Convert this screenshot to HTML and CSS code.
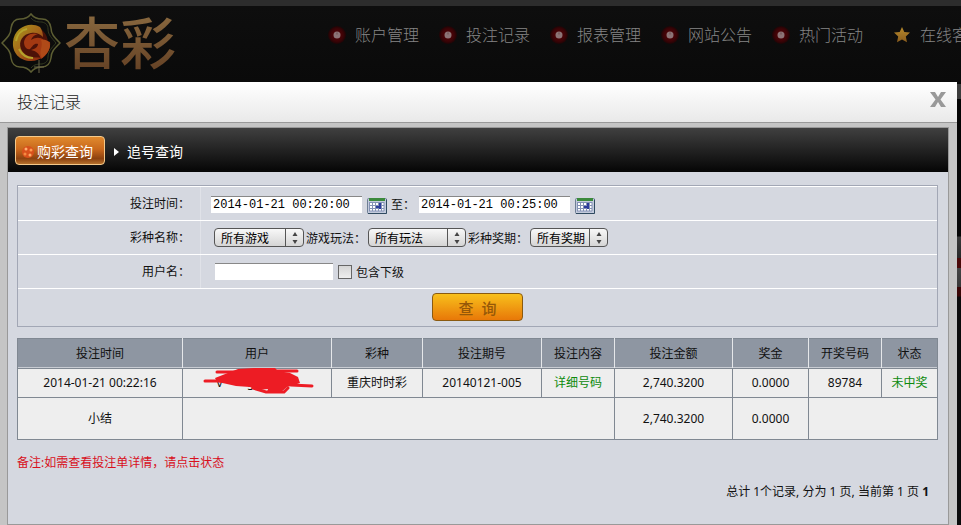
FILE: index.html
```html
<!DOCTYPE html>
<html lang="zh-CN">
<head>
  <meta charset="utf-8">
  <title>投注记录</title>
  <link rel="stylesheet" href="styles.css">
</head>
<body>
<svg class="defs" width="0" height="0">
  <defs>
    <radialGradient id="red">
      <stop offset="0" stop-color="#5a0508"/>
      <stop offset="0.7" stop-color="#3c0306"/>
      <stop offset="1" stop-color="#1c0506"/>
    </radialGradient>
    <linearGradient id="gold" x1="0" y1="0" x2="0" y2="1">
      <stop offset="0" stop-color="#b78a2c"/>
      <stop offset="1" stop-color="#8a5c1d"/>
    </linearGradient>
    <linearGradient id="fire" x1="0" y1="0" x2="1" y2="1">
      <stop offset="0" stop-color="#a89a1c"/>
      <stop offset="0.5" stop-color="#a5661a"/>
      <stop offset="1" stop-color="#8a1d0c"/>
    </linearGradient>
    <symbol id="dot" viewBox="0 0 20 20">
      <circle cx="10" cy="10" r="9" fill="url(#red)"/>
      <circle cx="10" cy="10" r="3.500" fill="#8c7476"/>
      <path d="M10 7.500v2" stroke="#6c4c4e" stroke-width="1"/>
    </symbol>
    <symbol id="star" viewBox="0 0 20 20">
      <path d="M10 2l2.300 5 5.700.600-4.200 4 1.200 5.700-5-2.900-5 2.900 1.200-5.700-4.200-4 5.700-.600z" fill="url(#gold)"/>
    </symbol>
    <symbol id="calendar" viewBox="0 0 20 17">
      <rect x="0.500" y="1.500" width="19" height="15" rx="1" fill="#c3cbdc" stroke="#6e7f95"/>
      <path d="M1 16.500h18.500v-14" fill="none" stroke="#2f4a60"/>
      <rect x="2" y="1" width="16" height="3" fill="#3c8a3c"/>
      <rect x="2" y="5" width="15" height="9" fill="#fff"/>
      <path d="M2 5.500h15M2 8.500h15M2 11.500h15M2 14h15M2.500 5v9M5.500 5v9M8.500 5v9M11.500 5v9M14.500 5v9M17 5v9" stroke="#8492b5" stroke-width="1"/>
      <path d="M9 9h5v2H9zM12 6h2v6h-2z" fill="#2c3c9c"/>
    </symbol>
    <symbol id="arrows" viewBox="0 0 8 14">
      <path d="M4 1l2.500 4h-5zM4 13l2.500-4h-5z" fill="#444"/>
    </symbol>
  </defs>
</svg>

<header class="header">
  <a class="logo" href="#">
    <svg width="60" height="62" viewBox="0 0 60 62">
      <path d="M30 2c3 4 7 5 11 5 5 0 8 3 9 9 0 6 3 9 9 15-6 6-9 9-9 15-1 6-4 9-9 9-4 0-8 1-11 5-3-4-7-5-11-5-5 0-8-3-9-9 0-6-3-9-9-15 6-6 9-9 9-15 1-6 4-9 9-9 4 0 8-1 11-5z" fill="none" stroke="#5d5e33" stroke-width="1.500"/>
      <path d="M30 6c3 4 8 4 11 4 4 1 6 3 6 7 0 6 4 9 8 14-4 5-8 8-8 14 0 4-2 6-6 7-3 0-8 0-11 4" fill="none" stroke="#333a20"/>
      <circle cx="30" cy="31" r="17" fill="#4c1208"/>
      <path d="M39 15c-11-6-26 1-27 15-1 11 7 19 18 19 5 0 9-2 12-4-10 2-19-1-22-8-3-8 2-15 10-16 5-1 9 1 12 4 0-4-1-7-3-10z" fill="url(#fire)"/>
      <path d="M23 30c1-7 8-10 14-8-4 1-6 3-7 6 5-3 9-3 13 0l6 2c1 7-3 13-9 17-2-6-5-8-10-9 4-1 7-3 7-6-4-1-5 2-8 5-3 1-6-2-6-7z" fill="#a33912"/>
      <path d="M40 28c5-1 9 1 9 6-1 6-5 9-8 12-2-3-2-6-1-9 1-4 1-6 0-9z" fill="#b04a18"/>
      <path d="M15 29c1-6 5-11 11-12M18 37c3 6 8 9 14 9" fill="none" stroke="#b4a32c" stroke-width="2"/>
      <path d="M38 48v13M33 55h10" stroke="#6b6549"/>
    </svg>
    <span class="logo-text">杏彩</span>
  </a>
  <nav class="nav">
    <a href="#"><svg class="nav-icon"><use href="#dot"/></svg>账户管理</a>
    <a href="#"><svg class="nav-icon"><use href="#dot"/></svg>投注记录</a>
    <a href="#"><svg class="nav-icon"><use href="#dot"/></svg>报表管理</a>
    <a href="#"><svg class="nav-icon"><use href="#dot"/></svg>网站公告</a>
    <a href="#"><svg class="nav-icon"><use href="#dot"/></svg>热门活动</a>
    <a href="#" class="service"><svg class="nav-icon"><use href="#star"/></svg>在线客服</a>
  </nav>
</header>

<div class="dialog">
  <div class="dialog-title">
    <h1>投注记录</h1>
    <button class="close" type="button" aria-label="关闭">
      <svg width="18" height="16" viewBox="0 0 18 16"><path d="M1 0h5l3 5 3-5h5l-5.500 7.500L17 15h-5l-3-5-3 5H1l5.500-7.500z" fill="#999"/></svg>
    </button>
  </div>
  <div class="panel">
    <div class="tabs">
      <a class="tab active" href="#">
        <svg width="14" height="14" viewBox="0 0 14 14">
          <circle cx="7" cy="7" r="6" fill="#d8501c"/>
          <circle cx="5" cy="4" r="1.500" fill="#ffb070"/>
          <circle cx="10" cy="5" r="1.500" fill="#ff9a50"/>
          <circle cx="4" cy="9" r="1.500" fill="#f58a40"/>
          <circle cx="9" cy="10" r="1.500" fill="#ffa860"/>
        </svg>购彩查询</a>
      <a class="tab" href="#">
        <svg width="5" height="8" viewBox="0 0 5 8"><path d="M0 0l5 4-5 4z" fill="#fff"/></svg>追号查询</a>
    </div>

    <div class="content">
      <form class="search">
        <div class="row">
          <label class="name" for="start">投注时间：</label>
          <div class="field">
            <input class="text date" id="start" type="text" value="2014-01-21 00:20:00">
            <svg class="calendar"><use href="#calendar"/></svg>
            <label class="to" for="end">至：</label>
            <input class="text date" id="end" type="text" value="2014-01-21 00:25:00">
            <svg class="calendar"><use href="#calendar"/></svg>
          </div>
        </div>
        <div class="row">
          <label class="name" for="game">彩种名称：</label>
          <div class="field selects">
            <span class="select game"><select id="game"><option>所有游戏</option></select><svg><use href="#arrows"/></svg></span>
            <label for="play">游戏玩法：</label>
            <span class="select play"><select id="play"><option>所有玩法</option></select><svg><use href="#arrows"/></svg></span>
            <label for="issue">彩种奖期：</label>
            <span class="select issue"><select id="issue"><option>所有奖期</option></select><svg><use href="#arrows"/></svg></span>
          </div>
        </div>
        <div class="row">
          <label class="name" for="user">用户名：</label>
          <div class="field users">
            <input class="text user" id="user" type="text">
            <input class="check" id="sub" type="checkbox">
            <label for="sub">包含下级</label>
          </div>
        </div>
        <div class="row submit">
          <button class="query" type="button"><span>查</span><span>询</span></button>
        </div>
      </form>

      <table class="records">
        <colgroup>
          <col class="c-time"><col class="c-user"><col class="c-game"><col class="c-issue"><col class="c-detail"><col class="c-amount"><col class="c-prize"><col class="c-code"><col class="c-state">
        </colgroup>
        <thead>
          <tr>
            <th>投注时间</th>
            <th>用户</th>
            <th>彩种</th>
            <th>投注期号</th>
            <th>投注内容</th>
            <th>投注金额</th>
            <th>奖金</th>
            <th>开奖号码</th>
            <th>状态</th>
          </tr>
        </thead>
        <tbody>
          <tr>
            <td>2014-01-21 00:22:16</td>
            <td>
              <div class="masked">v&emsp;&emsp;g&emsp;&emsp;g&emsp;
                <svg width="112" height="28" viewBox="0 0 112 28">
                  <path d="M2 14h18M14 5h35M50 4h44M88 18l21 1" fill="none" stroke="#ed1c24" stroke-width="3" stroke-linecap="round"/>
                  <path d="M12 11l23-9 16-1h21l3 3 12 2 8 4 2 6-9 3-4 1-6 5-14 0 1-3-10 1-8-3-14-1-18-4-2-2z" fill="#ed1c24"/>
                  <path d="M50 21l13 4h18l4-4" fill="none" stroke="#ed1c24" stroke-width="3" stroke-linecap="round"/>
                </svg>
              </div>
            </td>
            <td>重庆时时彩</td>
            <td>20140121-005</td>
            <td><a href="#">详细号码</a></td>
            <td>2,740.3200</td>
            <td>0.0000</td>
            <td>89784</td>
            <td><a href="#">未中奖</a></td>
          </tr>
          <tr class="total">
            <td>小结</td>
            <td colspan="4"></td>
            <td>2,740.3200</td>
            <td>0.0000</td>
            <td colspan="2"></td>
          </tr>
        </tbody>
      </table>

      <p class="note">备注:如需查看投注单详情<span class="mark">，</span>请点击状态</p>
      <p class="pages">总计 1个记录, 分为 1 页, 当前第 1 页 <b>1</b></p>
    </div>
  </div>
</div>
</body>
</html>
```
FILE: styles.css
```css
* {
  box-sizing: border-box;
}
body {
  margin: 0;
  overflow: hidden;
  background: linear-gradient(#080808 84px, #3c3c3c 84px, #3c3c3c 99px, #050505 99px, #050505 236px, #3a3a3a 237px, #282828 258px, #4a0808 258px, #4a0808 268px, #444 268px, #383838 287px, #3a0606 287px, #3a0606 296px, #0a0a0a 297px);
  font-family: "Noto Sans", "Noto Sans CJK SC", sans-serif;
  font-size: 12px;
  line-height: 18px;
  color: #111;
}
a {
  text-decoration: none;
}
/* the TC face centres the full-width colon and comma */
label,
.mark {
  font-family: "Noto Sans CJK TC", sans-serif;
}
.defs {
  position: absolute;
}

/* site header */
.header {
  display: flex;
  height: 82px;
  border-top: 6px solid #2d2d2d;
  background: linear-gradient(#0e0e0e, #0a0a0a);
  overflow: hidden;
}
.logo {
  display: flex;
  flex: none;
  width: 327px;
  padding: 6px 0 0 1px;
}
.logo-text {
  margin-left: 3px;
  font-family: "Noto Sans CJK SC", sans-serif;
  font-size: 56px;
  font-weight: 500;
  line-height: 56px;
  background: linear-gradient(#8a6a40, #5e3a20);
  -webkit-background-clip: text;
  background-clip: text;
  color: transparent;
}
.nav {
  display: flex;
  gap: 19px;
  padding-top: 17px;
}
.nav a {
  display: flex;
  align-items: center;
  gap: 8px;
  height: 24px;
  white-space: nowrap;
  font-size: 16px;
  font-weight: 300;
  color: #858585;
}
.nav .service {
  margin-left: 10px;
}
.nav-icon {
  width: 20px;
  height: 20px;
}

/* dialog */
.dialog {
  margin-right: 4px;
  padding-bottom: 8px;
  background: #c5c5c5;
}
.dialog-title {
  display: flex;
  align-items: center;
  justify-content: space-between;
  height: 41px;
  padding: 0 10px 0 17px;
  border-bottom: 1px solid #999;
  background: linear-gradient(#fff, #e9e9e9);
}
.dialog-title h1 {
  margin: 0;
  font-size: 16px;
  font-weight: 300;
  color: #222;
}
.close {
  display: flex;
  padding: 0 0 4px;
  border: 0;
  background: none;
  cursor: pointer;
}
.panel {
  margin: 4px 8px 0 7px;
  border: 1px solid #999;
  background: #d5d8e0;
}
.tabs {
  display: flex;
  align-items: center;
  gap: 9px;
  height: 44px;
  padding: 0 7px;
  background: linear-gradient(#404040, #050505);
}
.tab {
  display: flex;
  align-items: center;
  gap: 8px;
  padding-top: 4px;
  font-size: 14px;
  color: #fff;
}
.tab.active {
  gap: 2px;
  height: 29px;
  padding: 4px 11px 0 5px;
  border: 1px solid #f5c98a;
  border-radius: 4px;
  background: linear-gradient(#e08a2e, #c9681c 45%, #8c4210 80%, #b5702c);
}
.content {
  padding: 13px 10px 23px 9px;
}

/* search form */
.search {
  border: 1px solid #a2a7b5;
}
.row {
  display: flex;
  height: 34px;
  border-top: 1px solid #fff;
}
.name {
  width: 183px;
  padding: 7px 10px 0 0;
  border-right: 1px solid #e0e2e8;
  text-align: right;
}
.field {
  display: flex;
  align-items: center;
  padding-left: 10px;
}
.text {
  width: 151px;
  height: 17px;
  padding: 0 2px;
  border: 0;
  border-top: 1px solid #888;
  background: #fff;
  font-family: "Liberation Mono", monospace;
  font-size: 12px;
  color: #000;
}
.date {
  margin-top: 2px;
}
.calendar {
  width: 20px;
  height: 17px;
  margin: 3px 4px 0 5px;
}
.to {
  width: 28px;
}
.selects {
  gap: 2px;
  padding-left: 13px;
}
.select {
  position: relative;
  display: flex;
}
.select select {
  width: 100%;
  height: 19px;
  padding: 0 0 0 6px;
  border: 1px solid #555;
  border-radius: 4px;
  appearance: none;
  background: linear-gradient(#555, #555) right 17px top / 1px 100% no-repeat, linear-gradient(#f8f8f8, #d5d5d5);
  font-family: "Noto Sans CJK SC", sans-serif;
  font-size: 12px;
  color: #000;
}
.select svg {
  position: absolute;
  top: 3px;
  right: 5px;
  width: 8px;
  height: 14px;
  pointer-events: none;
}
.game {
  width: 90px;
}
.play {
  width: 98px;
}
.issue {
  width: 78px;
}
.users {
  padding-left: 14px;
}
.user {
  width: 118px;
}
.check {
  appearance: none;
  width: 14px;
  height: 14px;
  margin: 0 4px 0 5px;
  border: 1px solid #666;
  background: linear-gradient(#d5d5d5, #eee);
}
.submit {
  justify-content: center;
  height: 38px;
  padding-top: 4px;
}
.query {
  display: flex;
  align-items: center;
  justify-content: center;
  gap: 8px;
  width: 91px;
  height: 28px;
  padding: 0;
  border: 1px solid #8a5a10;
  border-radius: 4px;
  background: linear-gradient(#f8c01c, #e87808);
  font-family: "Noto Sans CJK SC", sans-serif;
  font-size: 15px;
  font-weight: 500;
  color: #965808;
  cursor: pointer;
}

/* records */
.records {
  width: 100%;
  margin-top: 11px;
  border-collapse: collapse;
  table-layout: fixed;
  background: #eee;
  text-align: center;
}
.records th,
.records td {
  height: 29px;
  padding: 0;
  border: 1px solid #808892;
}
.records th {
  height: 30px;
  border-right-color: #e5e7ea;
  border-left-color: #e5e7ea;
  background: #8e96a2;
  box-shadow: inset 0 -1px #c8ccd3;
  font-weight: 400;
}
.records th:first-child {
  border-left-color: #808892;
}
.records th:last-child {
  border-right-color: #808892;
}
.records .total td {
  height: 42px;
}
.records a {
  color: #0c8a0c;
}
.c-time {
  width: 165px;
}
.c-user {
  width: 149px;
}
.c-game {
  width: 91px;
}
.c-issue {
  width: 119px;
}
.c-detail {
  width: 73px;
}
.c-amount {
  width: 118px;
}
.c-prize {
  width: 76px;
}
.c-code {
  width: 73px;
}
.c-state {
  width: 56px;
}
.masked {
  position: relative;
  height: 18px;
}
.masked svg {
  position: absolute;
  top: -7px;
  left: 20px;
}
.note {
  margin: 13px 0 11px;
  color: #d8101c;
}
.pages {
  margin: 0;
  padding-right: 9px;
  text-align: right;
}
```
